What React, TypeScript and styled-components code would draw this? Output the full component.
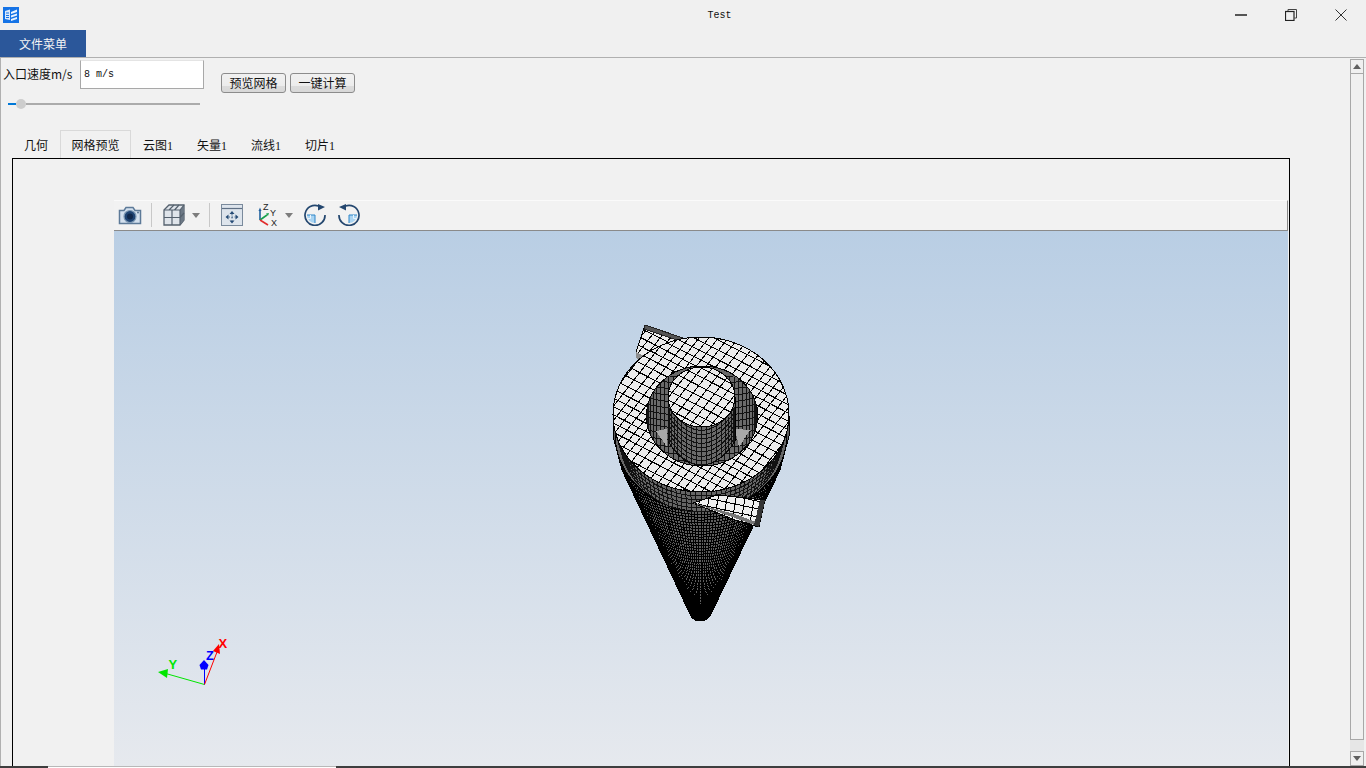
import { useMemo } from 'react';
import styled, { createGlobalStyle } from 'styled-components';

const GlobalStyle = createGlobalStyle`
    html, body {
        margin: 0;
        padding: 0;
        overflow: hidden;
        background: #f0f0f0;
    }
`;

const cjk = `"Noto Sans CJK SC", "Liberation Sans", sans-serif`;

const Window = styled.div`
    display: flex;
    flex-direction: column;
    width: 1366px;
    height: 768px;
    overflow: hidden;
    background: #f0f0f0;
    color: #111;
    font-family: ${cjk};
    font-size: 12px;
`;

const TitleBar = styled.div`
    display: flex;
    align-items: center;
    height: 30px;
    flex: none;
    padding-left: 3px;
`;

const Title = styled.div`
    flex: 1;
    text-align: center;
    font-family: "Liberation Mono", monospace;
    font-size: 10px;
    padding-left: 204px;
`;

const WindowButtons = styled.div`
    display: flex;
    align-items: center;
`;

const WindowButton = styled.div`
    display: flex;
    align-items: center;
    justify-content: center;
    width: 50px;
    height: 30px;
`;

const MenuBar = styled.div`
    display: flex;
    height: 27px;
    flex: none;
`;

const MenuTab = styled.div`
    display: flex;
    align-items: center;
    justify-content: center;
    width: 86px;
    background: #2b579a;
    color: #f4f4f4;
    font-size: 12px;
`;

const Main = styled.div`
    display: flex;
    flex: 1;
    min-height: 0;
    background: #f1f1f1;
    border-top: 1px solid #b0b0b0;
    border-left: 1px solid #b0b0b0;
`;

const Content = styled.div`
    display: flex;
    flex-direction: column;
    flex: 1;
    min-width: 0;
`;

const TopControls = styled.div`
    display: flex;
    align-items: flex-start;
    padding: 2px 0 0 2px;
    height: 70px;
    flex: none;
`;

const SpeedColumn = styled.div`
    display: flex;
    flex-direction: column;
    width: 201px;
`;

const SpeedRow = styled.div`
    display: flex;
    align-items: center;
    height: 29px;
`;

const SpeedLabel = styled.span`
    width: 77px;
    padding-bottom: 2px;
    font-size: 12px;
    white-space: nowrap;
`;

const SpeedInput = styled.div`
    box-sizing: border-box;
    width: 124px;
    height: 29px;
    padding: 0 3px;
    line-height: 28px;
    background: #fff;
    border: 1px solid #a8a8a8;
    border-top-color: #e4e4e4;
    font-family: "Liberation Mono", monospace;
    font-size: 10px;
`;

const Slider = styled.div`
    display: flex;
    align-items: center;
    width: 192px;
    height: 14px;
    margin: 8px 0 0 5px;
`;

const SliderFilled = styled.div`
    width: 8px;
    height: 2px;
    background: #0078d7;
`;

const SliderHandle = styled.div`
    width: 10px;
    height: 10px;
    flex: none;
    border-radius: 50%;
    background: #cdcdcd;
`;

const SliderRest = styled.div`
    flex: 1;
    height: 2px;
    background: #ababab;
`;

const Actions = styled.div`
    display: flex;
    gap: 4px;
    margin: 13px 0 0 17px;
`;

const ActionButton = styled.div`
    box-sizing: border-box;
    display: flex;
    align-items: center;
    justify-content: center;
    width: 65px;
    height: 20px;
    padding-bottom: 2px;
    border: 1px solid #8c8c8c;
    border-radius: 3px;
    background: linear-gradient(#f1f1f1 0%, #ececec 65%, #dcdcdc 66%, #d8d8d8 100%);
    font-size: 12px;
`;

const TabBar = styled.div`
    display: flex;
    height: 28px;
    flex: none;
    padding-left: 11px;
`;

const Tab = styled.div<{ $width: number; $active?: boolean }>`
    box-sizing: border-box;
    display: flex;
    align-items: center;
    justify-content: center;
    width: ${(p) => p.$width}px;
    border: 1px solid ${(p) => (p.$active ? '#d9d9d9' : 'transparent')};
    border-bottom: 0;
    font-family: "Liberation Serif", ${cjk};
    font-size: 12px;
`;

const TabPane = styled.div`
    box-sizing: border-box;
    display: flex;
    flex-direction: column;
    flex: 1;
    min-height: 0;
    width: 1278px;
    margin-left: 11px;
    padding: 41px 1px 0 101px;
    border: 1px solid #000;
    border-bottom: 0;
`;

const ViewerToolbar = styled.div`
    box-sizing: border-box;
    display: flex;
    align-items: center;
    height: 31px;
    flex: none;
    padding: 0 0 1px 4px;
    background: #f2f2f2;
    border-top: 1px solid #fafafa;
    border-right: 1px solid #8a8a8a;
    border-bottom: 1px solid #8a8a8a;
`;

const ToolIcon = styled.svg<{ $left?: number; $flip?: boolean }>`
    display: block;
    flex: none;
    margin-left: ${(p) => p.$left ?? 0}px;
    transform: ${(p) => (p.$flip ? 'scaleX(-1)' : 'none')};
`;

const ToolSeparator = styled.div<{ $left: number }>`
    width: 1px;
    height: 24px;
    flex: none;
    margin-left: ${(p) => p.$left}px;
    background: #c8c8c8;
`;

const Viewport = styled.div`
    flex: 1;
    min-height: 0;
    background: linear-gradient(#b9cee4 0%, #e6e9ee 100%);
`;

const ScrollBar = styled.div`
    display: flex;
    flex-direction: column;
    width: 14px;
    flex: none;
    margin: 1px 2px 0 59px;
`;

const ScrollButton = styled.div`
    box-sizing: border-box;
    display: flex;
    align-items: center;
    justify-content: center;
    height: 15px;
    flex: none;
    border: 1px solid #a8a8a8;
    background: #f0f0f0;
`;

const ScrollThumb = styled.div`
    box-sizing: border-box;
    flex: 1;
    border: 1px solid #a8a8a8;
    border-top: 0;
    background: #f0f0f0;
`;

const ScrollTrack = styled.div`
    height: 11px;
    flex: none;
    background: #e6e6e6;
`;

const BottomEdge = styled.div`
    display: flex;
    height: 2px;
    flex: none;
`;

const EdgeDark = styled.div<{ $grow?: boolean }>`
    width: 48px;
    flex: ${(p) => (p.$grow ? 1 : 'none')};
    background: #3e3e3e;
`;

const EdgeLight = styled.div`
    box-sizing: border-box;
    width: 288px;
    flex: none;
    background: #fff;
    border-top: 1px solid #b8b8b8;
`;

const MeshSvg = styled.svg`
    display: block;
`;

const CX = 701;
// outer silhouette of cylinder and cone together
const OUTLINE = 'M613 416L789 416L789 436L780 470L712 612Q708 621 700 621Q692 621 689 612L622 470L613 436Z';

// family of parallel lines through a centre point
const gridLines = (cx: number, cy: number, angle: number, step: number, reach: number) => {
    const rad = (angle * Math.PI) / 180;
    const dx = Math.cos(rad);
    const dy = Math.sin(rad);
    let d = '';
    for (let k = -Math.ceil(reach / step); k <= reach / step; k++) {
        const bend = 1.5 * Math.sin(k * 0.7);
        const px = cx - dy * k * step;
        const py = cy + dx * k * step + bend;
        d += `M${(px - dx * reach).toFixed(1)} ${(py - dy * reach).toFixed(1)}L${(px + dx * reach).toFixed(1)} ${(py + dy * reach).toFixed(1)}`;
    }
    return d;
};

const skewGrid = (cx: number, cy: number, step: number, reach: number) =>
    gridLines(cx, cy, 27, step, reach) + gridLines(cx, cy, -52, step, reach);

const coneMesh = () => {
    let d = '';
    const top = 450;
    const bottom = 618;
    const halfAt = (y: number) => 88 - ((y - top) / (bottom - top)) * 77;
    for (let y = top; y < bottom; y += 3.2) {
        const w = halfAt(y);
        d += `M${CX - w} ${y}Q${CX} ${y + w * 0.5} ${CX + w} ${y}`;
    }
    for (let i = 0; i <= 64; i++) {
        const a = (i / 64) * Math.PI;
        d += `M${CX + Math.cos(a) * 88} ${top + 22 * Math.sin(a)}L${CX + Math.cos(a) * 11} ${bottom + 3 * Math.sin(a)}`;
    }
    return d;
};

// skirt under the top ring: rows follow the ring edge, narrowing downwards
const bodyMesh = () => {
    let d = '';
    const ringAt = (s: number, t: number) => {
        const a = t * Math.PI;
        return [CX + (88 - s * 6) * Math.cos(a), 414.5 + s * 20 + 77.5 * Math.sin(a)];
    };
    for (let s = 0; s <= 1; s += 0.2) {
        for (let i = 0; i <= 40; i++) {
            const [x, y] = ringAt(s, i / 40);
            d += `${i === 0 ? 'M' : 'L'}${x.toFixed(1)} ${y.toFixed(1)}`;
        }
    }
    for (let i = 0; i <= 54; i++) {
        const [x1, y1] = ringAt(0, i / 54);
        const [x2, y2] = ringAt(1, i / 54);
        d += `M${x1.toFixed(1)} ${y1.toFixed(1)}L${x2.toFixed(1)} ${y2.toFixed(1)}`;
    }
    return d;
};

const wallMesh = (left: number, right: number, top: number, bottom: number, rows: number, cols: number, sag: number) => {
    let d = '';
    const mid = (left + right) / 2;
    const half = (right - left) / 2;
    for (let r = 0; r <= rows; r++) {
        const y = top + ((bottom - top) * r) / rows;
        d += `M${left} ${y}Q${mid} ${y + sag * 2} ${right} ${y}`;
    }
    for (let c = 0; c <= cols; c++) {
        const cos = Math.cos((c / cols) * Math.PI);
        const arc = sag * Math.sin((c / cols) * Math.PI);
        d += `M${mid + cos * half} ${top + arc}L${mid + cos * half} ${bottom + arc}`;
    }
    return d;
};

const CycloneMesh = () => {
    const paths = useMemo(
        () => ({
            cone: coneMesh(),
            body: bodyMesh(),
            ring: skewGrid(CX, 414, 8.2, 130),
            hole: wallMesh(646, 757, 372, 462, 14, 30, 6),
            pipe: wallMesh(668, 735, 403, 442, 9, 20, 23),
            cap: skewGrid(CX, 397, 8.2, 60),
            inlet: skewGrid(660, 338, 7.5, 40),
            outlet: gridLines(725, 510, 12, 7, 50) + gridLines(725, 510, 100, 9, 50),
        }),
        [],
    );

    return (
        <MeshSvg width="1173" height="535" viewBox="114 231 1173 535">
            <defs>
                <clipPath id="outline-clip">
                    <path d={OUTLINE} />
                </clipPath>
                <clipPath id="ring-clip">
                    <ellipse cx={CX} cy="414.500" rx="88" ry="77.500" />
                </clipPath>
                <clipPath id="hole-clip">
                    <ellipse cx="702" cy="416" rx="55.500" ry="50" />
                </clipPath>
                <clipPath id="pipe-clip">
                    <path d="M668 397L735 397L735 441Q720 465 701 465Q682 465 668 441Z" />
                </clipPath>
                <clipPath id="cap-clip">
                    <ellipse cx="701.500" cy="397" rx="33.500" ry="30" />
                </clipPath>
                <clipPath id="inlet-clip">
                    <path d="M645 325L686 340L680 352L640 360L636 352Z" />
                </clipPath>
                <clipPath id="outlet-clip">
                    <path d="M693 503L717 495L765 500L759 527L735 520Z" />
                </clipPath>
            </defs>

            <g shapeRendering="crispEdges">
                <path d={OUTLINE} fill="#5e5e5e" stroke="#000" />
                <g clipPath="url(#outline-clip)">
                    <path d={paths.cone} fill="none" stroke="#000" strokeWidth="1" />
                    <ellipse cx={CX} cy="434" rx="86" ry="77.500" fill="#666" stroke="#000" />
                    <path d={paths.body} fill="none" stroke="#111" strokeWidth="1" />
                </g>

                <path d="M645 325L686 340L680 352L640 360L636 352Z" fill="#ececec" stroke="#000" />
                <g clipPath="url(#inlet-clip)">
                    <path d={paths.inlet} fill="none" stroke="#000" strokeWidth="1" />
                </g>
                <path d="M645 325L686 339L683 342L644 329Z" fill="#555" stroke="#222" />
                <path d="M636 352L640 354L644 356L640 360L636 358Z" fill="#8c8c8c" />

                <ellipse cx={CX} cy="414.500" rx="88" ry="77.500" fill="#ececec" stroke="#000" />
                <g clipPath="url(#ring-clip)">
                    <path d={paths.ring} fill="none" stroke="#000" strokeWidth="1" />
                </g>

                <ellipse cx="702" cy="416" rx="55.500" ry="50" fill="#6a6a6a" stroke="#000" />
                <g clipPath="url(#hole-clip)">
                    <path d={paths.hole} fill="none" stroke="#111" strokeWidth="1" />
                    <path d="M656 431L667 429L667 447Z" fill="#a8a8a8" />
                    <path d="M735 429L750 430L739 447Z" fill="#a8a8a8" />
                </g>

                <path d="M668 397L735 397L735 441Q720 465 701 465Q682 465 668 441Z" fill="#6a6a6a" stroke="#000" />
                <g clipPath="url(#pipe-clip)">
                    <path d={paths.pipe} fill="none" stroke="#111" strokeWidth="1" />
                </g>

                <ellipse cx="701.500" cy="397" rx="33.500" ry="30" fill="#ececec" stroke="#000" />
                <g clipPath="url(#cap-clip)">
                    <path d={paths.cap} fill="none" stroke="#000" strokeWidth="1" />
                </g>

                <path d="M693 503L717 495L765 500L759 527L735 520Z" fill="#efefef" stroke="#000" />
                <g clipPath="url(#outlet-clip)">
                    <path d={paths.outlet} fill="none" stroke="#000" strokeWidth="1" />
                </g>
                <path d="M693 503L735 518L757 526L756 522L735 514Z" fill="#777" />
                <path d="M765 500L759 527L754 525L760 500Z" fill="#333" />
            </g>

            <g>
                <line x1="204.500" y1="684.500" x2="164" y2="673" stroke="#00e600" strokeWidth="1" />
                <path d="M158 672L168 669L167 678Z" fill="#00e600" />
                <text x="168.500" y="669" fill="#00e600" fontFamily="Liberation Sans, sans-serif" fontSize="13" fontWeight="700">Y</text>
                <line x1="204.500" y1="684.500" x2="204.500" y2="665" stroke="#0000ff" strokeWidth="1" />
                <path d="M204 660L208.500 665L207 669.500L201 669.500L199.500 665Z" fill="#0000ff" />
                <text x="206" y="660" fill="#0000ff" fontFamily="Liberation Sans, sans-serif" fontSize="13" fontWeight="700">Z</text>
                <line x1="204.500" y1="684.500" x2="217" y2="652" stroke="#ff0000" strokeWidth="1" />
                <path d="M219 644L220 654L213 651Z" fill="#ff0000" />
                <text x="218.500" y="648" fill="#ff0000" fontFamily="Liberation Sans, sans-serif" fontSize="13" fontWeight="700">X</text>
            </g>
        </MeshSvg>
    );
};

const AppIcon = () => (
    <svg width="16" height="16" viewBox="0 0 16 16">
        <rect width="16" height="16" fill="#1573e6" />
        <path d="M2 4L7 2.500L7 13L2 12Z" fill="#dbe9fb" />
        <path d="M3 6H6M3 8.500H6M3 10.500H6" stroke="#1573e6" strokeWidth="1" />
        <path d="M8 5L14 2.500V5L8 7ZM8 8.500L14 6.500V8.500L8 10.500ZM8 12L14 10V12L8 14Z" fill="#eaf3fe" />
    </svg>
);

const CameraIcon = () => (
    <ToolIcon width="24" height="20" viewBox="0 0 24 20">
        <path d="M1.500 5.500H6L8 2.500H15L17 5.500H22.500V18.500H1.500Z" fill="#d3e0ee" stroke="#5d7a98" strokeWidth="1.500" />
        <circle cx="12" cy="11.500" r="6" fill="#1f4473" stroke="#7f9ab5" strokeWidth="1.200" />
        <circle cx="12" cy="11.500" r="3" fill="#10284c" />
        <circle cx="20" cy="7.500" r="0.900" fill="#4e6a88" />
    </ToolIcon>
);

const CubeIcon = () => (
    <ToolIcon $left={11} width="22" height="22" viewBox="0 0 22 22">
        <path d="M1 6L6 1H21V16L17 21H1Z" fill="#dfe4ea" stroke="#55616e" strokeWidth="1.300" />
        <path d="M17 6L21 1V16L17 21Z" fill="#6c7885" />
        <path d="M1 6H17V21M17 6L21 1M1 13.500H17M9 6V21M6 6L11 1M11.500 6L16 1M17 13.500L21 9" fill="none" stroke="#55616e" strokeWidth="1.200" />
    </ToolIcon>
);

const DropArrow = ({ left }: { left: number }) => (
    <ToolIcon $left={left} width="8" height="5" viewBox="0 0 8 5">
        <path d="M0 0H8L4 5Z" fill="#7d7d7d" />
    </ToolIcon>
);

const FitIcon = () => (
    <ToolIcon $left={11} width="22" height="22" viewBox="0 0 22 22">
        <rect x="0.500" y="0.500" width="21" height="21" fill="#dde4ec" stroke="#7a8a9c" />
        <path d="M1 4.500H21" stroke="#5f7085" strokeWidth="1.200" />
        <path d="M11 7L13.500 10H8.500ZM11 19.500L8.500 16.500H13.500ZM4.500 13L7.500 10.500V15.500ZM17.500 13L14.500 15.500V10.500Z" fill="#244a75" />
        <path d="M11 10V16.500M7.500 13H14.500" stroke="#244a75" strokeWidth="0.800" strokeDasharray="1.500 1.500" />
    </ToolIcon>
);

const AxesIcon = () => (
    <ToolIcon $left={13} width="23" height="24" viewBox="0 0 23 24">
        <path d="M4 17V7" stroke="#1f5f9e" strokeWidth="1.600" />
        <path d="M2.500 8L4 4.500L5.500 8Z" fill="#1f5f9e" />
        <path d="M4 17L11 12" stroke="#17a04c" strokeWidth="1.600" />
        <path d="M10 10.500L13 10L12 13Z" fill="#17a04c" />
        <path d="M4 17L12 22" stroke="#e12c2c" strokeWidth="1.600" />
        <text x="7" y="7" fontFamily="Liberation Sans, sans-serif" fontSize="9" fill="#222">Z</text>
        <text x="14" y="13" fontFamily="Liberation Sans, sans-serif" fontSize="9" fill="#222">Y</text>
        <text x="15" y="23" fontFamily="Liberation Sans, sans-serif" fontSize="9" fill="#222">X</text>
    </ToolIcon>
);

const RotateIcon = ({ left, flip }: { left: number; flip?: boolean }) => (
    <ToolIcon $left={left} $flip={flip} width="22" height="22" viewBox="0 0 22 22">
        <path d="M11 11H3A8 8 0 0 0 11 19Z" fill="#a9d4f2" />
        <path d="M3 11H11V19" fill="none" stroke="#2f86c9" strokeWidth="1" />
        <path d="M6.500 11V14.500H3.500" fill="none" stroke="#e9f4fc" strokeWidth="1" />
        <path d="M14.500 2A10 10 0 1 0 21 11" fill="none" stroke="#24476f" strokeWidth="1.700" />
        <path d="M14 0L21 3L14 6.500Z" fill="#24476f" />
    </ToolIcon>
);

export default function App() {
    return (
        <Window>
            <GlobalStyle />
            <TitleBar>
                <AppIcon />
                <Title>Test</Title>
                <WindowButtons>
                    <WindowButton>
                        <svg width="12" height="2" viewBox="0 0 12 2">
                            <rect width="12" height="2" fill="#555" />
                        </svg>
                    </WindowButton>
                    <WindowButton>
                        <svg width="12" height="12" viewBox="0 0 12 12">
                            <path d="M3 2.500V0.500H11.500V9H9.500" fill="none" stroke="#444" />
                            <rect x="0.500" y="2.500" width="8.500" height="9" fill="none" stroke="#222" strokeWidth="1.200" />
                        </svg>
                    </WindowButton>
                    <WindowButton>
                        <svg width="12" height="12" viewBox="0 0 12 12">
                            <path d="M0.500 0.500L11.500 11.500M11.500 0.500L0.500 11.500" stroke="#333" strokeWidth="1" />
                        </svg>
                    </WindowButton>
                </WindowButtons>
            </TitleBar>
            <MenuBar>
                <MenuTab>文件菜单</MenuTab>
            </MenuBar>
            <Main>
                <Content>
                    <TopControls>
                        <SpeedColumn>
                            <SpeedRow>
                                <SpeedLabel>入口速度m/s</SpeedLabel>
                                <SpeedInput>8 m/s</SpeedInput>
                            </SpeedRow>
                            <Slider>
                                <SliderFilled />
                                <SliderHandle />
                                <SliderRest />
                            </Slider>
                        </SpeedColumn>
                        <Actions>
                            <ActionButton>预览网格</ActionButton>
                            <ActionButton>一键计算</ActionButton>
                        </Actions>
                    </TopControls>
                    <TabBar>
                        <Tab $width={48}>几何</Tab>
                        <Tab $width={71} $active>网格预览</Tab>
                        <Tab $width={54}>云图1</Tab>
                        <Tab $width={54}>矢量1</Tab>
                        <Tab $width={54}>流线1</Tab>
                        <Tab $width={54}>切片1</Tab>
                    </TabBar>
                    <TabPane>
                        <ViewerToolbar>
                            <CameraIcon />
                            <ToolSeparator $left={9} />
                            <CubeIcon />
                            <DropArrow left={7} />
                            <ToolSeparator $left={9} />
                            <FitIcon />
                            <AxesIcon />
                            <DropArrow left={6} />
                            <RotateIcon left={11} />
                            <RotateIcon left={12} flip />
                        </ViewerToolbar>
                        <Viewport>
                            <CycloneMesh />
                        </Viewport>
                    </TabPane>
                </Content>
                <ScrollBar>
                    <ScrollButton>
                        <svg width="8" height="5" viewBox="0 0 8 5">
                            <path d="M4 0L8 5H0Z" fill="#606060" />
                        </svg>
                    </ScrollButton>
                    <ScrollThumb />
                    <ScrollTrack />
                    <ScrollButton>
                        <svg width="8" height="5" viewBox="0 0 8 5">
                            <path d="M0 0H8L4 5Z" fill="#606060" />
                        </svg>
                    </ScrollButton>
                </ScrollBar>
            </Main>
            <BottomEdge>
                <EdgeDark />
                <EdgeLight />
                <EdgeDark $grow />
            </BottomEdge>
        </Window>
    );
}
